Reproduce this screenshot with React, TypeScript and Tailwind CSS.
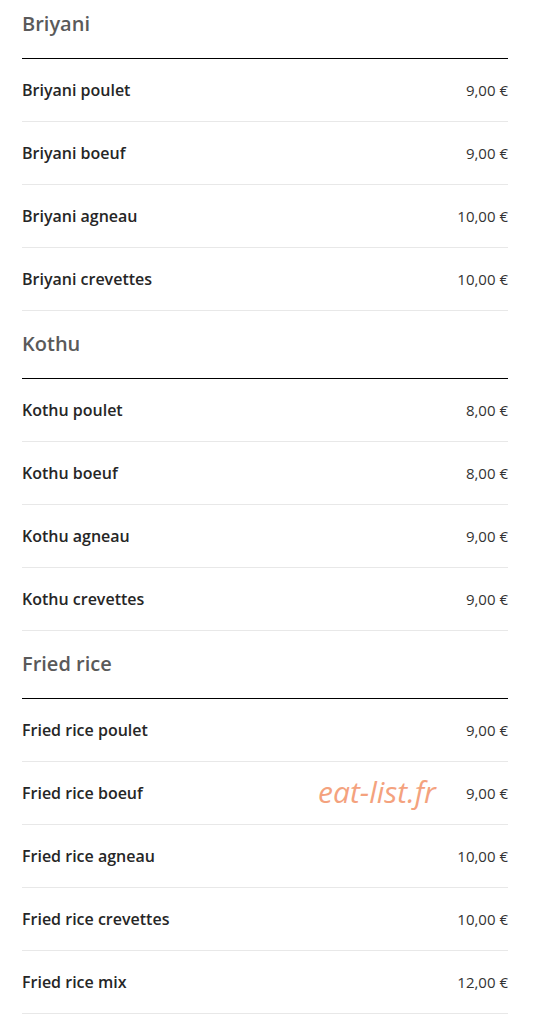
const menu = [
  {
    title: "Briyani",
    items: [
      { name: "Briyani poulet", price: "9,00 €" },
      { name: "Briyani boeuf", price: "9,00 €" },
      { name: "Briyani agneau", price: "10,00 €" },
      { name: "Briyani crevettes", price: "10,00 €" },
    ],
  },
  {
    title: "Kothu",
    items: [
      { name: "Kothu poulet", price: "8,00 €" },
      { name: "Kothu boeuf", price: "8,00 €" },
      { name: "Kothu agneau", price: "9,00 €" },
      { name: "Kothu crevettes", price: "9,00 €" },
    ],
  },
  {
    title: "Fried rice",
    items: [
      { name: "Fried rice poulet", price: "9,00 €" },
      { name: "Fried rice boeuf", price: "9,00 €" },
      { name: "Fried rice agneau", price: "10,00 €" },
      { name: "Fried rice crevettes", price: "10,00 €" },
      { name: "Fried rice mix", price: "12,00 €" },
    ],
  },
];

export default function App() {
  return (
    <div className="relative w-[544px] min-h-[1031px] bg-white font-['Open_Sans',sans-serif] overflow-hidden">
      <div className="ml-[22px] w-[486px]">
        {menu.map((section, i) => (
          <section key={section.title}>
            {/* Section title */}
            <h2
              className={`${i === 0 ? "pt-[10px]" : "pt-[19px]"} pb-[20px] border-b border-black text-[20px] leading-[28px] font-semibold text-[#5a5a5a]`}
            >
              {section.title}
            </h2>
            {section.items.map((item) => (
              <div
                key={item.name}
                className="flex h-[63px] items-center justify-between border-b border-[#e8e8e8]"
              >
                <span className="text-[16px] font-semibold text-[#262626]">{item.name}</span>
                <span className="text-[15px] text-[#333]">{item.price}</span>
              </div>
            ))}
          </section>
        ))}
      </div>

      {/* Watermark */}
      <div className="absolute left-[318px] top-[772px] text-[30px] leading-[40px] italic text-[#f4a27e]">
        eat-list.fr
      </div>
    </div>
  );
}
